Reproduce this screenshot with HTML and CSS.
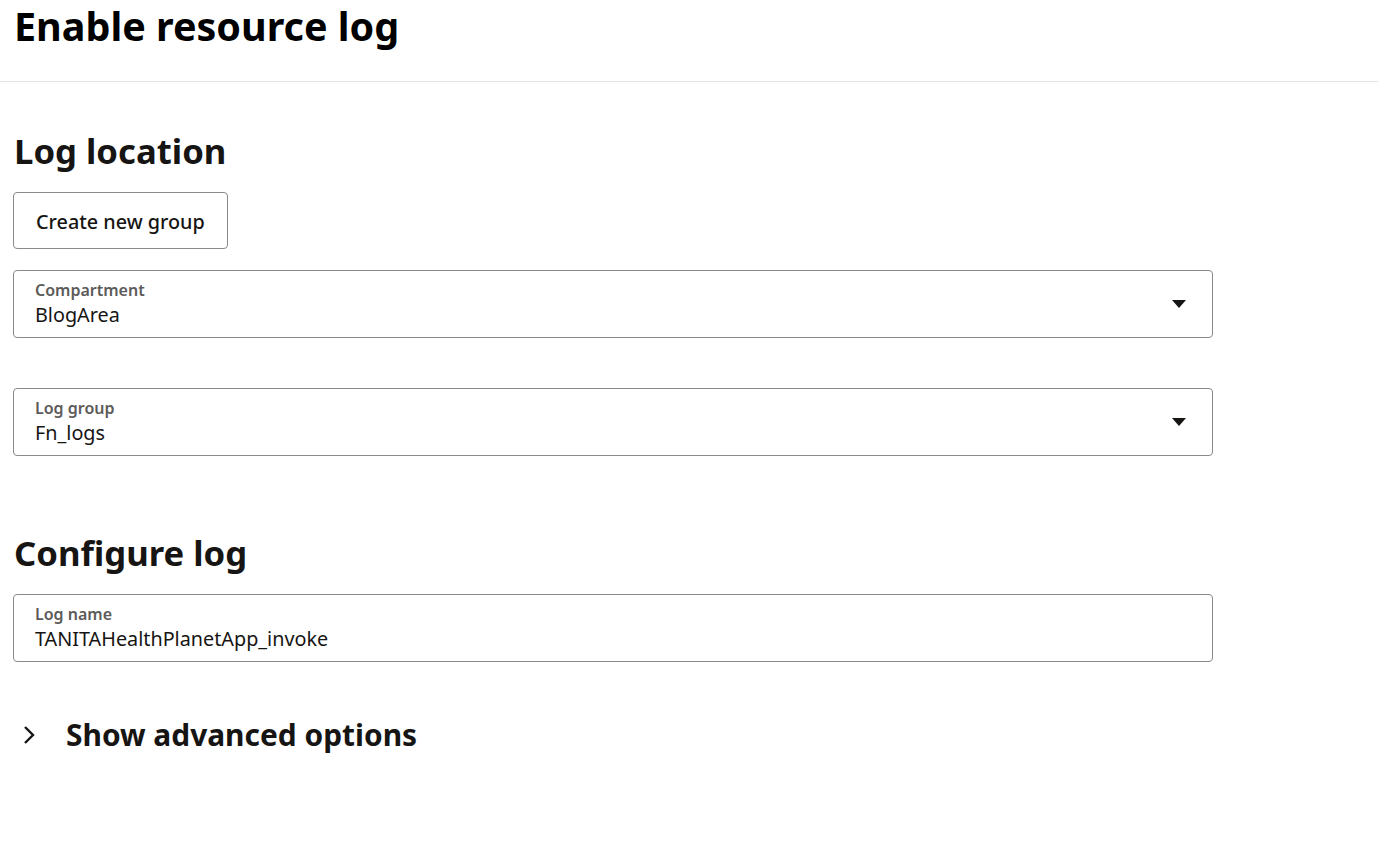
FILE: index.html
```html
<!DOCTYPE html>
<html lang="en">
<head>
<meta charset="utf-8">
<title>Enable resource log</title>
<link rel="stylesheet" href="styles.css">
</head>
<body>
<header class="page-header">
  <h1 class="page-title">Enable resource log</h1>
</header>
<main class="content">
  <section class="section">
    <h2 class="section-title">Log location</h2>
    <button class="btn" type="button">Create new group</button>
    <div class="field select">
      <div class="field-text">
        <span class="field-label">Compartment</span>
        <span class="field-value">BlogArea</span>
      </div>
      <span class="caret"></span>
    </div>
    <div class="field select">
      <div class="field-text">
        <span class="field-label">Log group</span>
        <span class="field-value">Fn_logs</span>
      </div>
      <span class="caret"></span>
    </div>
  </section>
  <section class="section section-config">
    <h2 class="section-title">Configure log</h2>
    <div class="field">
      <div class="field-text">
        <span class="field-label">Log name</span>
        <span class="field-value">TANITAHealthPlanetApp_invoke</span>
      </div>
    </div>
  </section>
  <div class="advanced">
    <svg class="chevron" width="14" height="20" viewBox="0 0 14 20" aria-hidden="true"><path d="M3 2 L11 10 L3 18" fill="none" stroke="#161513" stroke-width="2.4"/></svg>
    <span class="advanced-text">Show advanced options</span>
  </div>
</main>
</body>
</html>
```

FILE: styles.css
```css
* { box-sizing: border-box; }
html, body { margin: 0; padding: 0; background: #fff; }
body {
  font-family: "Noto Sans", "Open Sans", sans-serif;
  color: #161513;
}
.page-header {
  border-bottom: 1px solid #e4e4e4;
  height: 82px;
  padding: 0 14px;
}
.page-title {
  margin: 0;
  font-size: 39.5px;
  font-weight: 700;
  line-height: 52px;
  color: #000;
}
.content {
  padding: 0 13px;
}
.section {
  display: flex;
  flex-direction: column;
  align-items: flex-start;
  width: 1200px;
}
.section-title {
  margin: 46px 0 18px 1px;
  font-size: 34.7px;
  font-weight: 700;
  line-height: 46px;
}
.btn {
  font-family: inherit;
  font-size: 19.8px;
  font-weight: 500;
  color: #161513;
  background: #fff;
  border: 1px solid #8a8a88;
  border-radius: 4px;
  height: 57px;
  padding: 2px 22px 0;
  margin-bottom: 21px;
}
.field {
  width: 1200px;
  height: 68px;
  border: 1px solid #8a8a88;
  border-radius: 4px;
  display: flex;
  align-items: center;
  padding: 0 26px 0 21px;
  margin-bottom: 50px;
}
.field-text {
  flex: 1;
  display: flex;
  flex-direction: column;
}
.field-label {
  font-size: 16px;
  font-weight: 600;
  color: #5c5b59;
  line-height: 22px;
  margin-top: -1px;
}
.field-value {
  font-size: 19.8px;
  line-height: 27px;
  color: #161513;
}
.caret {
  width: 0;
  height: 0;
  border-left: 7.5px solid transparent;
  border-right: 7.5px solid transparent;
  border-top: 8px solid #161513;
}
.section-config .section-title { margin-top: 24px; }
.section-config .field { margin-bottom: 0; }
.advanced {
  display: flex;
  align-items: center;
  margin-top: 52px;
  padding-left: 9px;
}
.chevron { margin-right: 30px; }
.advanced-text {
  font-size: 29.9px;
  font-weight: 700;
}
```
